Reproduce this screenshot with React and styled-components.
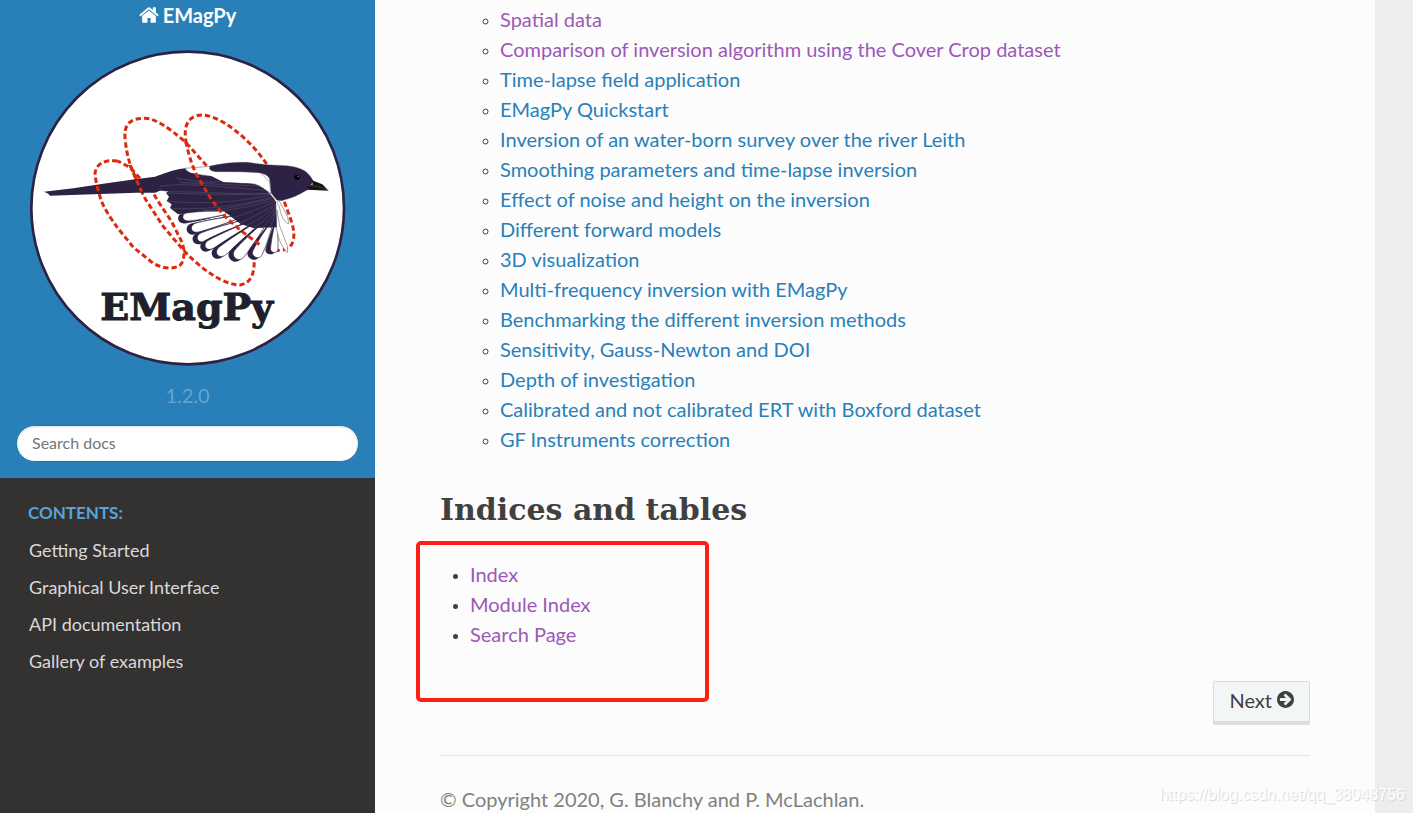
import React from "react";
import styled, { createGlobalStyle } from "styled-components";

const exampleLinks = [
  { title: "Spatial data", visited: true },
  {
    title: "Comparison of inversion algorithm using the Cover Crop dataset",
    visited: true
  },
  { title: "Time-lapse field application" },
  { title: "EMagPy Quickstart" },
  { title: "Inversion of an water-born survey over the river Leith" },
  { title: "Smoothing parameters and time-lapse inversion" },
  { title: "Effect of noise and height on the inversion" },
  { title: "Different forward models" },
  { title: "3D visualization" },
  { title: "Multi-frequency inversion with EMagPy" },
  { title: "Benchmarking the different inversion methods" },
  { title: "Sensitivity, Gauss-Newton and DOI" },
  { title: "Depth of investigation" },
  { title: "Calibrated and not calibrated ERT with Boxford dataset" },
  { title: "GF Instruments correction" }
];

const indexLinks = ["Index", "Module Index", "Search Page"];

const menuLinks = [
  "Getting Started",
  "Graphical User Interface",
  "API documentation",
  "Gallery of examples"
];

const GlobalStyle = createGlobalStyle`
  * {
    box-sizing: border-box;
  }
  body {
    margin: 0;
    background: #ededed;
    color: #404040;
    font-family: Lato, "Open Sans", sans-serif;
    font-size: 20px;
    line-height: 30px;
  }
`;

const Layout = styled.div`
  position: relative;
  display: flex;
  height: 100vh;
  overflow: hidden;
`;

const Sidebar = styled.nav`
  flex: 0 0 375px;
  background: #343131;
`;

const SidebarTop = styled.div`
  display: flex;
  flex-direction: column;
  align-items: center;
  padding: 0 16px 16px;
  background: #2980b9;
`;

const Brand = styled.a`
  display: flex;
  flex-direction: column;
  align-items: center;
  gap: 20px;
  color: #fcfcfc;
  font-weight: 700;
  text-decoration: none;
`;

const BrandName = styled.span`
  display: flex;
  align-items: center;
  gap: 4px;
`;

const Version = styled.div`
  margin: 14px 0 15px;
  color: rgba(255, 255, 255, 0.3);
`;

const SearchForm = styled.form`
  width: 100%;
`;

const SearchInput = styled.input`
  display: block;
  width: 100%;
  height: 37px;
  padding: 0 15px 3px;
  border: 1px solid #2472a4;
  border-radius: 50px;
  background: #fff;
  box-shadow: inset 0 1px 3px #ddd;
  font-family: inherit;
  font-size: 16px;
  &::placeholder {
    color: #757575;
  }
`;

const Caption = styled.p`
  margin: 20px 0 4px;
  padding: 0 28px;
  color: #55a5d9;
  font-size: 17px;
  font-weight: 700;
  text-transform: uppercase;
`;

const Menu = styled.ul`
  margin: 0;
  padding: 0;
  list-style: none;
`;

const MenuLink = styled.a`
  display: block;
  padding: 0 29px;
  color: #d9d9d9;
  font-size: 18px;
  line-height: 37px;
  text-decoration: none;
`;

const Content = styled.main`
  flex: 0 1 1000px;
  padding: 4px 65px 0;
  background: #fcfcfc;
`;

const LinkList = styled.ul`
  margin: 0;
  padding-left: ${props => (props.$nested ? 60 : 30)}px;
  list-style: ${props => (props.$nested ? "circle" : "disc")};
  li::marker {
    font-size: 15px;
  }
`;

const DocLink = styled.a`
  color: ${props => (props.$visited ? "#9b59b6" : "#2980b9")};
  text-decoration: none;
`;

const Heading = styled.h1`
  margin: 36px 0 29px;
  font-family: "Roboto Slab", "DejaVu Serif", serif;
  font-size: 30px;
  font-weight: 700;
  line-height: 40px;
`;

const Marked = styled.div`
  position: relative;
`;

const Highlight = styled.div`
  position: absolute;
  top: -18px;
  left: -24px;
  width: 293px;
  height: 161px;
  border: 4px solid #ff1e12;
  border-radius: 5px;
  pointer-events: none;
`;

const Pager = styled.div`
  display: flex;
  justify-content: flex-end;
  margin: 32px 0 30px;
`;

const NextButton = styled.button`
  display: flex;
  align-items: center;
  gap: 5px;
  height: 44px;
  padding: 0 15px 7px;
  border: 1px solid rgba(0, 0, 0, 0.1);
  border-radius: 2px;
  background: #f3f6f6;
  box-shadow: inset 0 1px 2px -1px hsla(0, 0%, 100%, 0.5),
    inset 0 -3px 0 0 rgba(0, 0, 0, 0.1);
  color: #404040;
  font-family: inherit;
  font-size: 20px;
`;

const Rule = styled.hr`
  margin: 0 0 28px;
  border: 0;
  border-top: 1px solid #e1e4e5;
`;

const Copyright = styled.footer`
  color: #808080;
`;

const Watermark = styled.div`
  position: absolute;
  right: 8px;
  bottom: 3px;
  color: #fff;
  font-family: "Liberation Sans", Arial, sans-serif;
  font-size: 16px;
  text-shadow: 1px 1px 1px #d4d4d4;
`;

const HomeIcon = () => (
  <svg width="20" height="20" viewBox="60 60 1672 1672" fill="currentColor">
    <path d="M1472 992v480q0 26-19 45t-45 19h-384v-384h-256v384h-384q-26 0-45-19t-19-45v-480q0-1 .5-3t.5-3l575-474 575 474q1 2 1 6zm223-69l-62 74q-8 9-21 11h-3q-13 0-21-7l-692-577-692 577q-12 8-24 7-13-2-21-11l-62-74q-8-10-7-23.5t11-21.5l719-599q32-26 76-26t76 26l244 204v-195q0-14 9-23t23-9h192q14 0 23 9t9 23v408l219 182q10 8 11 21.5t-7 23.5z" />
  </svg>
);

const ArrowIcon = () => (
  <svg width="17" height="17" viewBox="128 128 1536 1536" fill="currentColor">
    <path d="M1413 896q0-27-18-45l-91-91-362-362q-18-18-45-18t-45 18l-91 91q-18 18-18 45t18 45l189 189h-502q-26 0-45 19t-19 45v128q0 26 19 45t45 19h502l-189 189q-19 19-19 45t19 45l91 91q18 18 45 18t45-18l362-362 91-91q18-18 18-45zm251 0q0 209-103 385.5t-279.5 279.5-385.5 103-385.5-103-279.5-279.5-103-385.5 103-385.5 279.5-279.5 385.5-103 385.5 103 279.5 279.5 103 385.5z" />
  </svg>
);

// base x, base y, tip x, tip y, half width
const feathers = [
  [615, 518, 474, 537, 16],
  [645, 533, 500, 572, 17],
  [663, 547, 518, 603, 17],
  [680, 553, 542, 627, 17],
  [700, 558, 578, 650, 18],
  [724, 560, 632, 660, 20],
  [748, 560, 692, 657, 18],
  [765, 560, 748, 643, 14]
];

const leaf = (bx, by, tx, ty, w) => {
  const length = Math.hypot(tx - bx, ty - by);
  const ux = (tx - bx) / length;
  const uy = (ty - by) / length;
  const at = (along, side) =>
    `${bx + ux * along - uy * side} ${by + uy * along + ux * side}`;
  return `M${at(0, w * 0.4)} C${at(length * 0.4, w * 0.8)} ${at(
    length * 0.65,
    w
  )} ${at(length * 0.86, w)} C${at(length * 1.04, w)} ${at(
    length * 1.04,
    -w
  )} ${at(length * 0.86, -w)} C${at(length * 0.65, -w)} ${at(
    length * 0.4,
    -w * 0.8
  )} ${at(0, -w * 0.4)}Z`;
};

const Logo = () => (
  <svg width="316" height="316" viewBox="30 30 948 948">
    <circle cx="503" cy="504" r="469" fill="#fff" stroke="#2d2244" strokeWidth="8" />
    <g fill="none" stroke="#dc2a0e" strokeWidth="9" strokeDasharray="16 9">
      <path d="M560 377L495 305C445 262 405 235 375 235C325 234 310 258 316 302C321 350 330 375 345 410C360 440 366 461 378 480L430 560L490 630C540 684 607 734 660 735C691 731 708 702 701 640" />
      <path d="M740 372C690 298 601 225 545 225C498 228 490 265 499 310" />
      <path d="M793 485L812 538C823 570 826 594 814 615C798 635 762 638 720 615" />
    </g>
    {feathers.map(([bx, by, tx, ty, w]) => (
      <g key={tx}>
        <path d={leaf(bx, by, tx, ty, w)} fill="#2d2244" />
        <path
          d={leaf(bx + 2, by, tx + 14, ty - 5, w - 3)}
          fill="#fff"
          stroke="#2d2244"
          strokeWidth="2"
        />
      </g>
    ))}
    <g fill="#fff" stroke="#777" strokeWidth="2">
      <path d="M770 487L778 500C783 525 790 545 806 552L803 530L776 480Z" />
      <path d="M769 562C774 595 783 617 802 638L803 620L779 558L771 510Z" />
      <path d="M495 385L570 379L585 392L720 397L748 425L754 460L705 432L610 427L570 408L510 400Z" />
    </g>
    <path
      fill="#2d2244"
      d="M72 455L160 445L260 430L345 418L405 410C432 403 450 390 495 385C500 398 520 403 575 409L610 427C650 429 690 430 705 433C730 440 750 458 768 485L770 562L700 564L662 552L612 514L555 512L474 523L450 504L455 493L440 483L447 470L438 459L445 454L420 452L405 458L350 458L90 467L85 461Z"
    />
    <path
      fill="#2d2244"
      stroke="#555"
      strokeWidth="1"
      d="M570 378C605 370 640 366 682 367L740 374L800 377C846 382 867 395 880 424L862 450C845 457 836 469 785 482L770 480L754 460C751 442 752 423 747 413C735 397 711 396 650 395L585 395Q570 393 568 385Z"
    />
    <path fill="#161616" d="M876 421L907 433L926 452L862 449L861 436L878 434Z" />
    <path fill="none" stroke="#888" strokeWidth="1" d="M862 437C885 435 905 442 926 452" />
    <circle cx="831" cy="412" r="8" fill="#000" />
    <circle cx="834" cy="409" r="2" fill="#aaa" />
    <g fill="none" stroke="#77738a" strokeWidth="1">
      <path d="M470 414C510 421 550 430 600 424M485 428L720 438M470 414L488 430M420 439L470 434C560 433 650 445 738 451M418 449L440 455C560 455 660 464 750 461" />
      <path d="M438 459C560 463 660 466 752 460M440 484C570 494 660 485 755 464M455 505C570 512 680 493 760 470M480 522C610 510 690 493 762 474M605 513C660 505 710 496 765 480M640 533C680 520 720 505 766 485M660 549C700 532 730 515 768 490M680 556C720 540 740 520 768 492M700 562C730 550 752 523 769 495M728 562C748 545 760 526 769 500M750 562C760 540 765 526 769 505" />
    </g>
    <g fill="none" stroke="#dc2a0e" strokeWidth="9" strokeDasharray="16 9">
      <path d="M293 363C250 357 224 376 225 405C228 429 238 465 245 485C259 517 277 541 290 560L340 622L400 670C435 690 475 687 485 670C497 647 491 619 485 605L455 545L415 485L400 460M360 415L330 382L293 363" />
      <path d="M330 375L345 410L365 455M497 304C506 343 514 372 530 405L575 480L610 525L660 570L720 615" />
    </g>
    <text
      x="241"
      y="840"
      fill="#221d31"
      stroke="#14261d"
      strokeWidth="3"
      fontFamily="DejaVu Serif, serif"
      fontSize="114"
      fontWeight="700"
    >
      EMagPy
    </text>
  </svg>
);

const App = () => (
  <Layout>
    <GlobalStyle />
    <Sidebar>
      <SidebarTop>
        <Brand href="#">
          <BrandName>
            <HomeIcon />
            EMagPy
          </BrandName>
          <Logo />
        </Brand>
        <Version>1.2.0</Version>
        <SearchForm>
          <SearchInput
            type="text"
            placeholder="Search docs"
            aria-label="Search docs"
          />
        </SearchForm>
      </SidebarTop>
      <Caption>Contents:</Caption>
      <Menu>
        {menuLinks.map(title => (
          <li key={title}>
            <MenuLink href="#">{title}</MenuLink>
          </li>
        ))}
      </Menu>
    </Sidebar>
    <Content>
      <LinkList $nested>
        {exampleLinks.map(({ title, visited }) => (
          <li key={title}>
            <DocLink href="#" $visited={visited}>
              {title}
            </DocLink>
          </li>
        ))}
      </LinkList>
      <Heading>Indices and tables</Heading>
      <Marked>
        <LinkList>
          {indexLinks.map(title => (
            <li key={title}>
              <DocLink href="#" $visited>
                {title}
              </DocLink>
            </li>
          ))}
        </LinkList>
        <Highlight />
      </Marked>
      <Pager>
        <NextButton type="button">
          Next <ArrowIcon />
        </NextButton>
      </Pager>
      <Rule />
      <Copyright>© Copyright 2020, G. Blanchy and P. McLachlan.</Copyright>
    </Content>
    <Watermark>https://blog.csdn.net/qq_38048756</Watermark>
  </Layout>
);

export default App;
